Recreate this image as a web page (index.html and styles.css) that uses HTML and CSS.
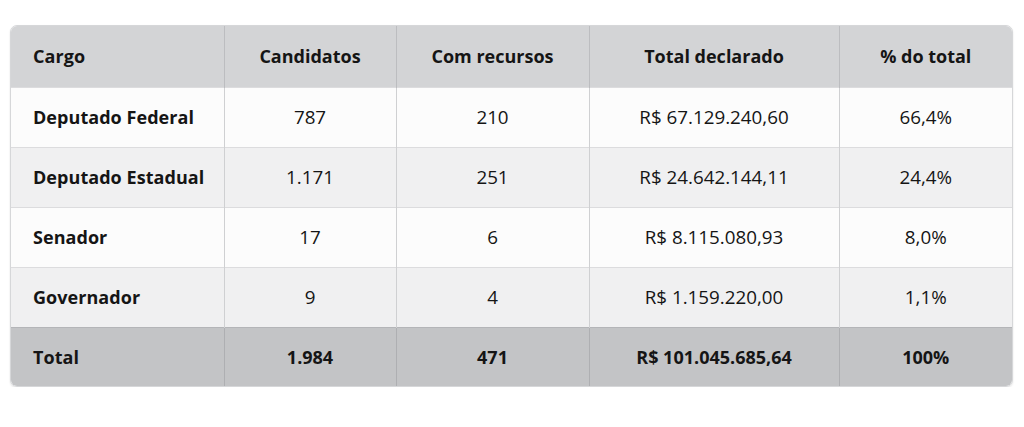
FILE: index.html
```html
<!DOCTYPE html>
<html lang="pt-BR">
<head>
<meta charset="utf-8">
<link rel="stylesheet" href="styles.css">
<title>Tabela</title>
</head>
<body>
<div class="page">
  <div class="card">
    <table class="data">
      <colgroup>
        <col class="c1"><col class="c2"><col class="c3"><col class="c4"><col class="c5">
      </colgroup>
      <thead>
        <tr class="head">
          <th class="first">Cargo</th>
          <th>Candidatos</th>
          <th>Com recursos</th>
          <th>Total declarado</th>
          <th>% do total</th>
        </tr>
      </thead>
      <tbody>
        <tr class="odd">
          <td class="first">Deputado Federal</td>
          <td>787</td><td>210</td><td>R$ 67.129.240,60</td><td>66,4%</td>
        </tr>
        <tr class="even">
          <td class="first">Deputado Estadual</td>
          <td>1.171</td><td>251</td><td>R$ 24.642.144,11</td><td>24,4%</td>
        </tr>
        <tr class="odd">
          <td class="first">Senador</td>
          <td>17</td><td>6</td><td>R$ 8.115.080,93</td><td>8,0%</td>
        </tr>
        <tr class="even">
          <td class="first">Governador</td>
          <td>9</td><td>4</td><td>R$ 1.159.220,00</td><td>1,1%</td>
        </tr>
        <tr class="total">
          <td class="first">Total</td>
          <td>1.984</td><td>471</td><td>R$ 101.045.685,64</td><td>100%</td>
        </tr>
      </tbody>
    </table>
  </div>
</div>
</body>
</html>
```
FILE: styles.css
```css
* { box-sizing: border-box; }
html, body { margin: 0; padding: 0; background: #ffffff; }
body {
  font-family: "Open Sans", "Noto Sans", sans-serif;
  color: #151515;
}
.page {
  padding: 25px 11px 0 10px;
}
.card {
  width: 1003px;
  border-radius: 7px;
  overflow: hidden;
  border: 1px solid #d6d7d9;
  box-shadow: 0 1px 2px rgba(0,0,0,0.12);
}
.data {
  width: 100%;
  border-collapse: collapse;
  table-layout: fixed;
}
.c1 { width: 213px; }
.c2 { width: 172px; }
.c3 { width: 193px; }
.c4 { width: 250px; }
.c5 { width: auto; }
.data th, .data td {
  text-align: center;
  font-size: 18.8px;
  border-left: 1px solid #cfd0d2;
  border-top: 1px solid #dcdcde;
  padding: 0;
}
.data th:first-child, .data td:first-child { border-left: none; }
.data .first {
  text-align: left;
  padding-left: 22px;
  font-weight: 700;
  font-size: 18px;
  letter-spacing: 0.05px;
}
.head th {
  height: 61px;
  background: #d3d4d6;
  font-weight: 700;
  font-size: 18px;
  border-top: none;
  border-left-color: #bcbdc0;
}
.odd td { background: #fcfcfc; height: 60px; }
.even td { background: #f0f0f1; height: 60px; }
.total td {
  background: #c3c4c6;
  height: 59px;
  font-weight: 700;
  font-size: 18px;
  border-top-color: #b4b5b8;
  border-left-color: #aeafb2;
}
```
